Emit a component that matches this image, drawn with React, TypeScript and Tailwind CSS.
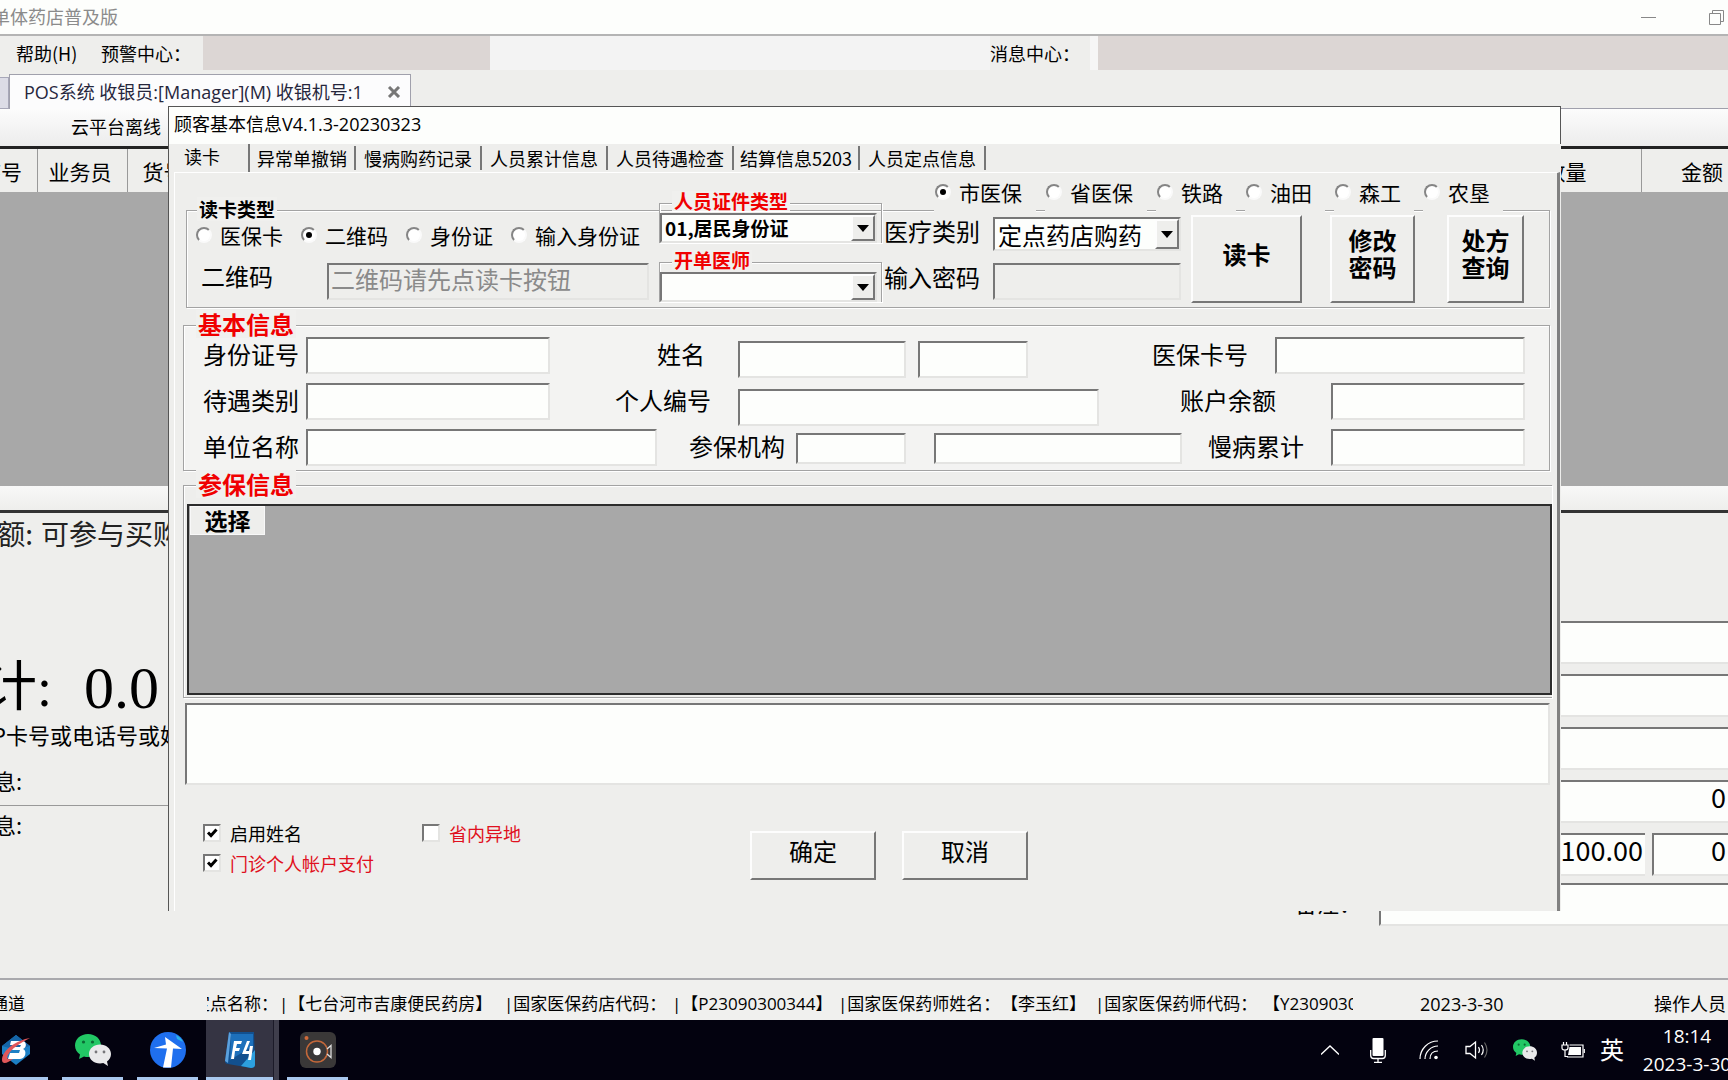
import type { ReactNode } from "react";

const CJK = "font-['Noto_Sans_CJK_SC',sans-serif]";
const SEGOE = "font-['Open_Sans','Noto_Sans_CJK_SC',sans-serif]";
const SERIF = "font-['Liberation_Serif','Noto_Sans_CJK_SC',serif]";
const SUNKEN =
  "border-2 border-t-[#777] border-l-[#777] border-r-[#e4e4e2] border-b-[#e4e4e2] rounded-none outline-none";
const RAISED =
  "border-2 border-t-[#fdfdfd] border-l-[#fdfdfd] border-r-[#777] border-b-[#777] bg-[#eeeeec]";

function Field({ label, className }: { label: string; className: string }) {
  return <input aria-label={label} className={`${SUNKEN} shrink-0 bg-[#fdfefc] px-1 text-[24px] ${className}`} />;
}

function RadioItem({ name, label, checked, className = "" }: { name: string; label: string; checked?: boolean; className?: string }) {
  return (
    <label className={`flex shrink-0 items-center gap-2 text-[21px] leading-6 whitespace-nowrap ${className}`}>
      <input
        type="radio"
        name={name}
        defaultChecked={checked}
        className="grid size-4 shrink-0 appearance-none place-items-center rounded-full border-2 border-t-[#858585] border-r-[#fafafa] border-b-[#fafafa] border-l-[#858585] bg-white before:size-[6px] before:rounded-full checked:before:bg-black"
      />
      {label}
    </label>
  );
}

function CheckItem({ label, checked, className = "" }: { label: string; checked?: boolean; className?: string }) {
  return (
    <label className={`flex items-center gap-[9px] text-[18px] leading-[30px] whitespace-nowrap ${className}`}>
      <span className="grid">
        <input
          type="checkbox"
          defaultChecked={checked}
          className={`peer col-start-1 row-start-1 size-[18px] appearance-none bg-white ${SUNKEN}`}
        />
        <svg viewBox="0 0 18 18" className="pointer-events-none col-start-1 row-start-1 hidden size-[18px] peer-checked:block">
          <path d="M5 8.500l3 3 5.500-6" fill="none" stroke="#000" strokeWidth="3" />
        </svg>
      </span>
      {label}
    </label>
  );
}

function Dropdown({ label, options, className }: { label: string; options: string[]; className: string }) {
  return (
    <div className={`relative bg-[#fdfefc] ${SUNKEN} ${className}`}>
      <select aria-label={label} className="block size-full appearance-none pl-[3px] outline-none">
        {options.map((o) => (
          <option key={o}>{o}</option>
        ))}
      </select>
      <span className={`pointer-events-none absolute inset-y-0 right-0 grid w-6 place-items-center ${RAISED}`}>
        <svg viewBox="0 0 12 7" className="h-[7px] w-3">
          <path d="M0 0h12L6 7z" fill="#000" />
        </svg>
      </span>
    </div>
  );
}

function Group({ title, titleClass, className, children }: { title: string; titleClass: string; className: string; children: ReactNode }) {
  return (
    <fieldset className={`relative border border-[#a3a3a3] shadow-[1px_1px_0_#fff,inset_1px_1px_0_#fff] ${className}`}>
      <legend className={`absolute bg-[#f0f0ee] px-0.5 font-bold whitespace-nowrap ${titleClass}`}>{title}</legend>
      {children}
    </fieldset>
  );
}

const insurers = [
  { label: "市医保", width: "w-[102px]" },
  { label: "省医保", width: "w-[102px]" },
  { label: "铁路", width: "w-[80px]" },
  { label: "油田", width: "w-[80px]" },
  { label: "森工", width: "w-[80px]" },
  { label: "农垦", width: "w-[80px]" },
];

const tabs = ["慢病购药记录", "人员累计信息", "人员待遇检查", "结算信息5203", "人员定点信息"];

function Dialog() {
  const text = "shrink-0 text-[24px] whitespace-nowrap";
  const label = `${text} leading-[34px]`;
  const push = "shrink-0 text-[24px] leading-[27px]";
  return (
    <section className="absolute top-[106px] right-[167px] left-[168px] flex h-[805px] flex-col overflow-hidden bg-[#eeeeec]">
      <header className={`h-[38px] shrink-0 border border-b-0 border-[#555] bg-[#fdfefc] pl-[5px] text-[18px] leading-[34px] ${SEGOE}`}>
        顾客基本信息V4.1.3-20230323
      </header>
      <div className="flex flex-1 flex-col border-l border-[#555] pr-px pl-[5px]">
        <nav className="flex h-7 shrink-0 text-[18px] leading-6">
          <button className="w-[76px] border-r-2 border-[#777] pr-5 pb-1 pl-[10px] text-left whitespace-nowrap">读卡</button>
          <button className="my-0.5 w-[106px] border-r-2 border-[#777]">异常单撤销</button>
          {tabs.map((t) => (
            <button key={t} className="my-0.5 w-[126px] border-r-2 border-[#777] whitespace-nowrap">
              {t}
            </button>
          ))}
        </nav>
        <div className="flex flex-1 flex-col border-t border-r-[3px] border-l border-t-white border-r-[#808080] border-l-white pr-[7px] pl-2">
          <div className="relative z-10 flex h-10 shrink-0 justify-end gap-[9px] pr-[47px]">
            {insurers.map((r, i) => (
              <RadioItem key={r.label} name="insurer" label={r.label} checked={i === 0} className={`bg-[#eeeeec] pb-[3px] pl-px ${r.width}`} />
            ))}
          </div>

          <Group title="读卡类型" titleClass="-top-[14px] left-[10px] text-[19px] leading-6" className="-mt-[3px] ml-[3px] flex h-[98px] shrink-0 items-start">
            <div className="flex-1 pt-3">
              <div className="flex gap-[18px] pl-[9px]">
                <RadioItem name="card" label="医保卡" />
                <RadioItem name="card" label="二维码" checked />
                <RadioItem name="card" label="身份证" />
                <RadioItem name="card" label="输入身份证" />
              </div>
              <div className="mt-4 flex pl-[14px]">
                <label htmlFor="qr" className={`${text} w-[126px] leading-[26px]`}>二维码</label>
                <input
                  id="qr"
                  placeholder="二维码请先点读卡按钮"
                  className={`${SUNKEN} h-[37px] w-[322px] bg-[#eeeeec] px-0.5 pb-1.5 text-[24px] placeholder:text-[#8a8a8a]`}
                />
              </div>
            </div>
            <div className="-mt-2 w-[223px] shrink-0 text-[19px] font-bold">
              <Group title="人员证件类型" titleClass="-top-[13px] left-3 text-[19px] leading-5 text-[#f00000]" className="border-b-0 pt-[9px] pr-1">
                <Dropdown label="人员证件类型" options={["01,居民身份证"]} className="h-[30px] leading-6" />
              </Group>
              <Group title="开单医师" titleClass="-top-[13px] left-3 text-[19px] leading-5 text-[#f00000]" className="mt-[19px] border-b-0 pt-[9px] pr-1">
                <Dropdown label="开单医师" options={[""]} className="h-[30px]" />
              </Group>
            </div>
            <div className="ml-0.5 shrink-0 pt-1.5">
              <div className="flex">
                <span className={`${text} w-[109px] leading-7`}>医疗类别</span>
                <Dropdown label="医疗类别" options={["定点药店购药"]} className="h-[34px] w-[188px] text-[24px] leading-[27px]" />
              </div>
              <div className="mt-3 flex">
                <label htmlFor="pwd" className={`${text} w-[109px] leading-7`}>输入密码</label>
                <input id="pwd" type="password" className={`${SUNKEN} h-[37px] w-[188px] bg-[#eeeeec]`} />
              </div>
            </div>
            <button className={`${push} ${RAISED} mt-1 ml-[10px] h-[88px] w-[111px] pb-3 font-bold`}>读卡</button>
            <button className={`${push} ${RAISED} mt-1 ml-7 h-[88px] w-[85px] px-3 pb-3 font-bold`}>修改密码</button>
            <button className={`${push} ${RAISED} mt-1 mr-[25px] ml-8 h-[88px] w-[77px] px-2 pb-3 font-bold`}>处方查询</button>
          </Group>

          <Group
            title="基本信息"
            titleClass="-top-4 left-3 text-[24px] leading-7 text-[#f00000]"
            className="mt-[17px] grid h-[146px] shrink-0 auto-rows-[46px] bg-[#f3f3f2] pt-[11px] pl-[19px]"
          >
            <div className="flex items-start">
              <span className={`${label} w-[103px]`}>身份证号</span>
              <Field label="身份证号" className="h-[37px] w-[244px]" />
              <span className={`${label} ml-[107px] w-[81px]`}>姓名</span>
              <Field label="姓名" className="mt-1 h-[37px] w-[168px]" />
              <Field label="姓名附加" className="mt-1 ml-3 h-[37px] w-[110px]" />
              <span className={`${label} ml-auto w-[123px]`}>医保卡号</span>
              <Field label="医保卡号" className="mr-6 h-[37px] w-[250px]" />
            </div>
            <div className="flex items-start">
              <span className={`${label} w-[103px]`}>待遇类别</span>
              <Field label="待遇类别" className="h-[37px] w-[244px]" />
              <span className={`${label} ml-[65px] w-[123px]`}>个人编号</span>
              <Field label="个人编号" className="mt-1.5 h-[37px] w-[361px]" />
              <span className={`${label} ml-auto w-[151px]`}>账户余额</span>
              <Field label="账户余额" className="mr-6 h-[37px] w-[194px]" />
            </div>
            <div className="flex items-start">
              <span className={`${label} w-[103px]`}>单位名称</span>
              <Field label="单位名称" className="h-[37px] w-[351px]" />
              <span className={`${label} ml-8 w-[107px]`}>参保机构</span>
              <Field label="参保机构代码" className="mt-1 h-[31px] w-[110px]" />
              <Field label="参保机构名称" className="mt-1 ml-7 h-[31px] w-[248px]" />
              <span className={`${label} ml-auto w-[123px]`}>慢病累计</span>
              <Field label="慢病累计" className="mr-6 h-[37px] w-[194px]" />
            </div>
          </Group>

          <Group
            title="参保信息"
            titleClass="-top-4 left-3 text-[24px] leading-7 text-[#f00000]"
            className="mt-[14px] -mr-0.5 h-[213px] shrink-0 border-r-0 pt-[18px] pl-[3px]"
          >
            <div className="h-[191px] border-2 border-[#2c2c2c] bg-[#a8a8a8] pl-px">
              <table>
                <thead>
                  <tr>
                    <th className="h-7 w-[74px] border border-[#f8f8f8] bg-[#eeeeec] p-0 pb-0.5 text-[23px] leading-6">选择</th>
                  </tr>
                </thead>
              </table>
            </div>
          </Group>
          <textarea aria-label="提示信息" className={`${SUNKEN} mt-[5px] ml-0.5 h-[82px] shrink-0 resize-none bg-[#fdfefc] p-2 text-[18px]`} />

          <div className="flex items-start pt-[33px] pl-5">
            <div className="flex w-[219px] flex-col">
              <CheckItem label="启用姓名" checked />
              <CheckItem label="门诊个人帐户支付" checked className="text-[#e01020]" />
            </div>
            <CheckItem label="省内异地" className="w-[328px] text-[#e01020]" />
            <div className="flex gap-[26px] pt-[13px]">
              <button className={`${push} ${RAISED} h-[49px] w-[126px] pb-[10px]`}>确定</button>
              <button className={`${push} ${RAISED} h-[49px] w-[126px] pb-[10px]`}>取消</button>
            </div>
          </div>
        </div>
      </div>
    </section>
  );
}

function WeChat({ className }: { className: string }) {
  return (
    <svg viewBox="0 0 36 32" className={className}>
      <path d="M13 0C5.500 0 0 5 0 11.500c0 4 2 7 5 9L4 25l5-2.500c1.300.4 2.600.5 4 .5 7.500 0 13-5 13-11.500S20.500 0 13 0z" fill="#22c865" />
      <circle cx="8.500" cy="8" r="1.600" fill="#0c6b35" />
      <circle cx="17.500" cy="8" r="1.600" fill="#0c6b35" />
      <path d="M25 10.500c-6 0-11 4-11 9.500s5 9.500 11 9.500c1.200 0 2.300-.2 3.300-.5L33 32l-1-4.500c2.500-1.700 4-4.300 4-7.500 0-5.500-5-9.500-11-9.500z" fill="#e9e9ea" />
      <circle cx="21" cy="18" r="1.400" fill="#77777a" />
      <circle cx="29" cy="18" r="1.400" fill="#77777a" />
    </svg>
  );
}

function Taskbar() {
  const app = "grid h-[60px] shrink-0 place-items-center border-b-[3px] border-[#a9c8ee] pt-[3px]";
  return (
    <footer className={`flex h-[60px] shrink-0 items-center overflow-hidden bg-[#03020f] text-white ${SEGOE}`}>
      <button aria-label="医保客户端" className={`${app} w-12 justify-start`}>
        <svg viewBox="0 0 32 32" className="size-8">
          <path d="M16 1l14 11v8L16 31 2 20v-8z" fill="#1c7fc4" />
          <path d="M16 1l14 11-14 4L2 12z" fill="#1565a8" />
          <path d="M11 7h11c5 0 5 7 1 8 4 1 3 10-3 10H8l2-6h9l1-3h-8l1-3h7l1-2H10z" fill="#fff" />
          <path d="M30 4C17 6 2 16 2 26c0 5 6 3 11-1-5 1-7 0-5-4C11 15 20 9 30 4z" fill="#e0575a" />
        </svg>
      </button>
      <button aria-label="微信" className={`${app} ml-[14px] w-[61px]`}>
        <WeChat className="h-8 w-9" />
      </button>
      <button aria-label="办公助手" className={`${app} ml-[14px] w-[61px]`}>
        <svg viewBox="0 0 36 36" className="size-9">
          <circle cx="18" cy="18" r="18" fill="#1f6fee" />
          <path d="M15 5l17 12-9-.5-2 19h-8l4-19-13-.5 12-3.500z" fill="#fff" />
          <path d="M26 3c4 2 6 4 7 7l-6-3z" fill="#2bb3e8" />
        </svg>
      </button>
      <button aria-label="F4" className={`${app} ml-2 w-[67px] bg-[#353443]`}>
        <svg viewBox="0 0 32 36" className="h-9 w-8">
          <path d="M5 0h25l1 33c0 2-2 3-4 3L4 32c-2 0-3-1-3-3z" fill="#12508f" />
          <path d="M7 2h22v12L6 28z" fill="#1d70bb" />
          <path d="M17 34l14-16v15c0 2-2 3-4 3z" fill="#2da0df" />
          <path d="M5 0L1 29l3 2L7 2z" fill="#5ba0dd" />
          <path d="M7 27l3-18h8l-1 3h-4l-1 4h4l-1 3h-4l-1 8zM23 9h3l-4 10h3l1-5h3l-2 14h-3l1-6h-7z" fill="#fff" />
        </svg>
      </button>
      <div className="h-[60px] w-[6px] border-l border-[#1b1a28] bg-[#3f3e4c]" />
      <button aria-label="录屏" className={`${app} ml-2 w-[61px]`}>
        <svg viewBox="0 0 36 36" className="size-9">
          <rect width="36" height="36" rx="6" fill="#3a3838" />
          <circle cx="17" cy="19.500" r="10.500" fill="none" stroke="#c4683a" strokeWidth="1.500" />
          <circle cx="17" cy="19.500" r="3.700" fill="#fff" />
          <circle cx="6.500" cy="6" r="2" fill="#d06a3a" />
          <path d="M27 17l4-3.500v12L27 22" fill="none" stroke="#ddd" strokeWidth="1.300" />
        </svg>
      </button>
      <div className="ml-auto flex shrink-0 items-center">
        <svg viewBox="0 0 18 10" className="h-[10px] w-[18px]">
          <path d="M0 9.500L9 1l9 8.500" fill="none" stroke="#fff" strokeWidth="1.300" />
        </svg>
        <svg viewBox="0 0 16 25" className="ml-[31px] h-[25px] w-4">
          <rect x="2.500" y="0" width="11" height="18" rx="1" fill="#fff" />
          <path d="M.7 12v5.500q0 3 3 3h8.600q3 0 3-3V12M8 21v3M4 24.300h8" fill="none" stroke="#fff" strokeWidth="1.300" />
        </svg>
        <svg viewBox="0 0 20 20" className="ml-[33px] size-5">
          <g fill="none" stroke="#fff" strokeWidth="1.200">
            <path d="M1 19C1 9 9 1 19 1M6 19C6 12 12 6 19 6M11 19c0-5 3-8 8-8" />
          </g>
          <circle cx="17" cy="17.500" r="1.800" fill="#fff" />
        </svg>
        <svg viewBox="0 0 24 20" className="ml-[26px] h-5 w-6">
          <path d="M1 6.500h4L10.500 2v16L5 13.500H1z" fill="none" stroke="#fff" strokeWidth="1.300" />
          <path d="M13.500 7q2 3 0 6M16.500 5q3.500 5 0 10" fill="none" stroke="#fff" strokeWidth="1.200" />
          <path d="M19.500 2.500q5 7.500 0 15" fill="none" stroke="#666" strokeWidth="1.200" />
        </svg>
        <WeChat className="ml-6 h-[22px] w-6" />
        <svg viewBox="0 0 24 16" className="ml-6 h-4 w-6">
          <path d="M1 3h6v3q0 2-3 2t-3-2zM2.500 0v3M5.500 0v3M4 8v6.500h3" fill="none" stroke="#fff" strokeWidth="1.200" />
          <path d="M8.500 3H22v12H6" fill="none" stroke="#fff" strokeWidth="1.200" />
          <path d="M8.500 5H20v8H7z" fill="#fff" />
          <path d="M23.300 7v4" stroke="#fff" strokeWidth="1.200" />
        </svg>
        <span className="ml-[15px] text-[24px] leading-7">英</span>
        <time className="-mr-[6px] ml-4 w-[94px] text-center text-[19px] leading-7">
          <span className="block">18:14</span>
          <span className="block whitespace-nowrap">2023-3-30</span>
        </time>
      </div>
    </footer>
  );
}

function SideField({ value, className = "" }: { value?: string; className?: string }) {
  return (
    <input
      aria-label="金额"
      defaultValue={value}
      className={`${SUNKEN} h-[43px] min-w-0 border-r-0 bg-[#fdfefc] pb-2.5 text-right text-[27px] leading-8 ${className}`}
    />
  );
}

function StatusBar() {
  return (
    <div className={`flex h-[42px] shrink-0 items-center border-t-2 border-[#a9a9ad] bg-[#f0f0ee] pt-2 text-[17px] leading-6 whitespace-nowrap ${SEGOE}`}>
      <div className="flex w-[25px] shrink-0 justify-end overflow-hidden">通道</div>
      <div className="ml-[182px] flex w-[1146px] shrink-0 overflow-hidden">
        <div className="-ml-[14px] flex">
          <span className="w-[86px] shrink-0">定点名称：</span>
          <span className="w-[225px] shrink-0">|【七台河市吉康便民药房】</span>
          <span className="w-[168px] shrink-0">|国家医保药店代码：</span>
          <span className="w-[166px] shrink-0">|【P23090300344】</span>
          <span className="w-[163px] shrink-0">|国家医保药师姓名：</span>
          <span className="w-[94px] shrink-0">【李玉红】</span>
          <span className="w-[168px] shrink-0">|国家医保药师代码：</span>
          <span className="shrink-0">【Y23090300</span>
        </div>
      </div>
      <span className="ml-[67px] text-[18px]">2023-3-30</span>
      <span className="mr-[2px] ml-auto text-[18px]">操作人员</span>
    </div>
  );
}

export default function App() {
  return (
    <div className={`relative flex min-h-screen w-full flex-col overflow-hidden bg-[#eeeeec] text-black ${CJK}`}>
      <header className={`flex h-9 shrink-0 items-center border-b-2 border-[#b4b4b4] bg-[#fdfefc] text-[18px] text-[#8b8b8b] ${SEGOE}`}>
        <div className="flex w-[118px] justify-end overflow-hidden whitespace-nowrap">单体药店普及版</div>
        <button aria-label="最小化" className="mr-[53px] ml-auto h-px w-[15px] bg-[#888]" />
        <button aria-label="还原" className="mr-1">
          <svg viewBox="0 0 15 15" className="size-[15px]">
            <path d="M.5 3.500h11v11H.5zM3.500 3.500v-3h11v11h-3" fill="none" stroke="#888" />
          </svg>
        </button>
      </header>

      <div className="flex h-[34px] shrink-0 items-stretch text-[18px] leading-[34px] whitespace-nowrap">
        <button className="w-[85px] shrink-0 pb-0.5 pl-4 text-left">帮助(H)</button>
        <span className="w-[118px] shrink-0 pl-4">预警中心：</span>
        <div className="w-[287px] shrink-0 bg-[#dcd6d4]" />
        <div className="w-[500px] shrink-0 bg-[#f3f3f3]" />
        <span className="w-[108px] shrink-0 border-r-8 border-[#f6f6f6]">消息中心：</span>
        <div className="flex-1 bg-[#dcd6d4]" />
      </div>

      <div className={`mt-1 flex h-[35px] shrink-0 items-end ${SEGOE}`}>
        <div className="h-8 w-[9px] border border-l-0 border-[#a7a7b8] bg-[#dcdce6]" />
        <div className="flex h-[35px] w-[402px] items-center border border-b-0 border-[#a0a0ac] bg-[#fcfcfd] pr-[9px] pl-[14px] text-[18px] text-[#26263c]">
          <span className="whitespace-nowrap">POS系统 收银员:[Manager](M) 收银机号:1</span>
          <button aria-label="关闭标签" className="ml-auto">
            <svg viewBox="0 0 14 12" className="h-3 w-[14px]">
              <path d="M2 1l10 10M12 1L2 11" stroke="#777" strokeWidth="3" />
            </svg>
          </button>
        </div>
        <div className="flex-1 self-stretch border-b border-[#a0a0ac]" />
      </div>

      <div className="h-10 shrink-0 border-b-[3px] border-[#222] bg-gradient-to-b from-[#fcfcfc] to-[#ececec] pl-[71px] text-[18px] leading-[34px]">
        云平台离线
      </div>

      <table className="w-full table-fixed border-collapse text-[21px] leading-10">
        <thead>
          <tr className="h-[43px] whitespace-nowrap">
            <th className="w-[37px] border-r border-[#999] p-0 font-normal">
              <div className="flex w-[22px] justify-end overflow-hidden">序号</div>
            </th>
            <th className="w-[90px] border-r border-[#999] p-0 pl-[11px] text-left font-normal">业务员</th>
            <th className="w-[90px] p-0 pl-[15px] text-left font-normal">货号</th>
            <th className="border-r border-[#999] p-0 pr-[54px] text-right font-normal">数量</th>
            <th className="w-[87px] p-0 pr-[5px] text-right font-normal">金额</th>
          </tr>
        </thead>
      </table>
      <div className="h-[294px] shrink-0 bg-[#a8a8a8]" />
      <div className="h-[27px] shrink-0 border-b-[3px] border-[#333] bg-gradient-to-b from-[#f8f8f8] to-[#eeeeec]" />

      <main className="flex flex-1 justify-between">
        <div className="w-[182px] shrink-0 whitespace-nowrap">
          <div className="flex h-10 text-[28px] leading-10 text-[#222]">
            <span className="flex w-[41px] shrink-0 justify-end overflow-hidden pr-2">金额:</span>
            <span>可参与买购</span>
          </div>
          <div className={`mt-[91px] flex h-[88px] items-center text-[60px] leading-[88px] ${SERIF}`}>
            <span className="flex w-[52px] shrink-0 justify-end overflow-hidden text-[54px]">合计:</span>
            <span className="ml-8">0.0</span>
          </div>
          <div className="flex h-9 w-[182px] justify-end overflow-hidden text-[22px] leading-9 -mt-4">VIP卡号或电话号或姓</div>
          <div className="mt-[10px] flex h-9 w-[22px] justify-end overflow-hidden text-[22px] leading-9">信息:</div>
          <div className="mt-[7px] w-[182px] border-t border-[#999]">
            <div className="flex h-9 w-[22px] justify-end overflow-hidden text-[22px] leading-9">信息:</div>
          </div>
        </div>
        <div className="flex w-[433px] shrink-0 flex-col pt-[108px]">
          <div className="flex flex-col items-end gap-[10px]">
            <SideField className="w-[220px]" />
            <SideField className="w-[220px]" />
            <SideField className="w-[220px]" />
            <SideField value="0" className="w-[220px] pr-0.5" />
            <div className="flex justify-end gap-[7px]">
              <SideField value="100.00" className="w-[138px] pr-0.5" />
              <SideField value="0" className="w-[76px] pr-0.5" />
            </div>
          </div>
          <div className="mt-[7px] flex">
            <span className="w-[84px] shrink-0 text-[22px] leading-[38px]">备注：</span>
            <SideField className="flex-1" />
          </div>
        </div>
      </main>

      <StatusBar />
      <Taskbar />
      <Dialog />
    </div>
  );
}
